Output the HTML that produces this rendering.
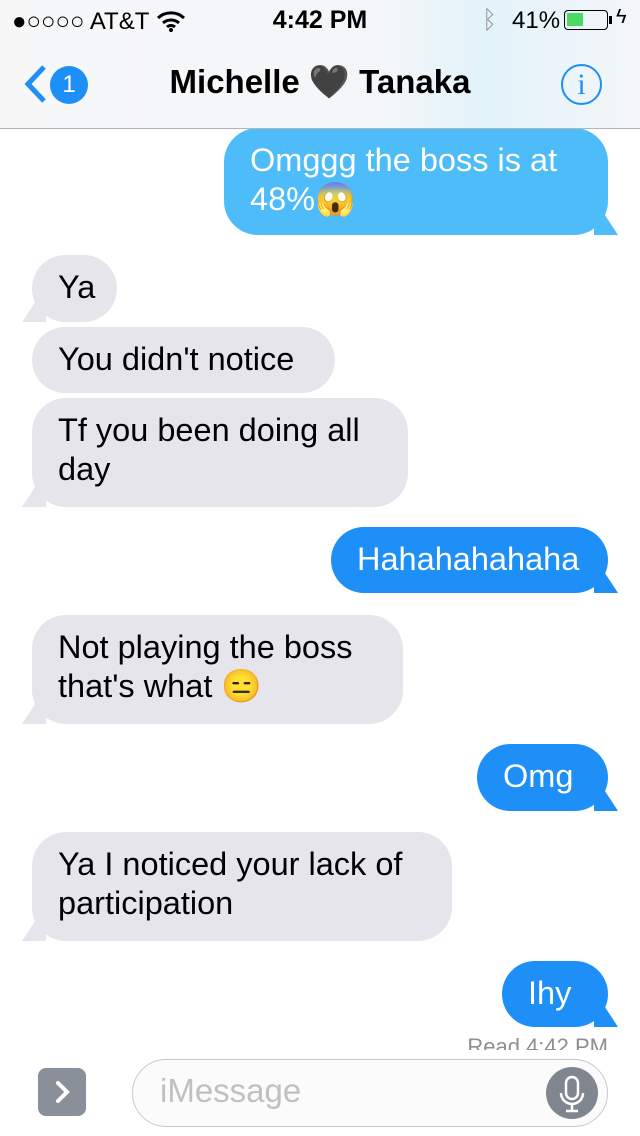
<!DOCTYPE html><html><head><meta charset="utf-8"><style>
body{margin:0;width:640px;height:1136px;overflow:hidden;background:#fff;font-family:"Liberation Sans","Noto Sans CJK JP",sans-serif;position:relative}
.b{position:absolute;font-size:32.5px;line-height:39px;padding:13px 26px;box-sizing:border-box;border-radius:34px;white-space:nowrap}
.g{background:#e6e5eb;color:#000;left:32px}
.u{background:#1d8ff7;color:#fff;right:32px}
.tl:after{content:"";position:absolute;left:-10px;bottom:0;width:24px;height:22px;background:#e6e5eb;clip-path:polygon(0 100%,60% 0,100% 0,100% 100%)}
.tr:after{content:"";position:absolute;right:-10px;bottom:0;width:24px;height:22px;background:inherit;clip-path:polygon(100% 100%,40% 0,0 0,0 100%)}
</style></head><body>
<div class="b u tr" style="top:128px;left:224px;height:107px;background:#4dbcf8;padding-left:26px">Omggg the boss is at<br>48%😱</div>
<div style="position:absolute;top:0;left:0;width:640px;height:128px;background:linear-gradient(90deg,#f7f7f8 0%,#f3f6f8 60%,#e3f3fa 75%,#f3f6f8 100%);border-bottom:1px solid #b4b4b8"></div>
<div style="position:absolute;top:8px;left:12px;font-size:24px">●○○○○ AT&amp;T</div>
<svg style="position:absolute;left:156px;top:10px" width="30" height="22" viewBox="0 0 30 22"><path d="M2 8a19 19 0 0 1 26 0M7 13a12 12 0 0 1 16 0M11 17a6 6 0 0 1 8 0" stroke="#000" stroke-width="3" fill="none"/><circle cx="15" cy="20" r="2"/></svg>
<div style="position:absolute;top:6px;left:0;width:640px;text-align:center;font-size:25px;font-weight:bold">4:42 PM</div>
<div style="position:absolute;top:6px;left:482px;font-size:25px;color:#999">ᛒ</div>
<div style="position:absolute;top:7px;left:512px;font-size:24px">41%</div>
<div style="position:absolute;top:10px;left:564px;width:44px;height:20px;border:1.5px solid #000;border-radius:4px;box-sizing:border-box"><div style="position:absolute;left:2px;top:2px;width:16px;height:13px;background:#4cd964"></div></div>
<div style="position:absolute;top:16px;left:609px;width:3px;height:8px;background:#000"></div>
<div style="position:absolute;top:6px;left:616px;font-size:20px">ϟ</div>
<svg style="position:absolute;left:22px;top:65px" width="30" height="40"><path d="M22 2L6 19L22 36" stroke="#1d8ff7" stroke-width="5" fill="none"/></svg>
<div style="position:absolute;left:50px;top:66px;width:38px;height:38px;border-radius:50%;background:#1d8ff7;color:#fff;font-size:24px;text-align:center;line-height:38px">1</div>
<div style="position:absolute;top:63px;left:0;width:640px;text-align:center;font-size:33px;font-weight:bold">Michelle 🖤 Tanaka</div>
<div style="position:absolute;left:561px;top:64px;width:37px;height:37px;border:2px solid #1d8ff7;border-radius:50%;color:#1d8ff7;font-family:'Liberation Serif',serif;font-size:30px;text-align:center;line-height:38px">i</div>
<div class="b g tl" style="top:255px;width:85px;height:67px">Ya</div>
<div class="b g" style="top:327px;width:303px;height:66px">You didn't notice</div>
<div class="b g tl" style="top:398px;width:376px;height:109px">Tf you been doing all<br>day</div>
<div class="b u tr" style="top:527px;width:277px;height:66px">Hahahahahaha</div>
<div class="b g tl" style="top:615px;width:371px;height:109px">Not playing the boss<br>that's what 😑</div>
<div class="b u tr" style="top:744px;width:131px;height:67px">Omg</div>
<div class="b g tl" style="top:832px;width:420px;height:109px">Ya I noticed your lack of<br>participation</div>
<div class="b u tr" style="top:961px;width:106px;height:66px">Ihy</div>
<div style="position:absolute;top:1034px;right:32px;font-size:22px;color:#8e8e93">Read 4:42 PM</div>
<div style="position:absolute;top:1050px;left:0;width:640px;height:86px;background:#fff"></div>
<div style="position:absolute;left:38px;top:1068px;width:48px;height:48px;border-radius:8px;background:#8a9099"></div>
<svg style="position:absolute;left:38px;top:1068px" width="48" height="48"><path d="M20 15l9 9l-9 9" stroke="#fff" stroke-width="4" fill="none" stroke-linecap="round"/></svg>
<div style="position:absolute;left:132px;top:1059px;width:476px;height:68px;border:1.5px solid #c8c8cc;border-radius:34px;box-sizing:border-box;background:#fbfbfb"></div>
<div style="position:absolute;left:160px;top:1072px;font-size:33px;color:#c0c0c4">iMessage</div>
<div style="position:absolute;left:546px;top:1067px;width:52px;height:52px;border-radius:50%;background:#808690"></div>
<svg style="position:absolute;left:546px;top:1067px" width="52" height="52"><rect x="20" y="10" width="12" height="22" rx="6" fill="none" stroke="#fff" stroke-width="2.5"/><path d="M15 26a11 11 0 0 0 22 0M26 37v7M20 44h12" stroke="#fff" stroke-width="2.5" fill="none"/></svg>
</body></html>
